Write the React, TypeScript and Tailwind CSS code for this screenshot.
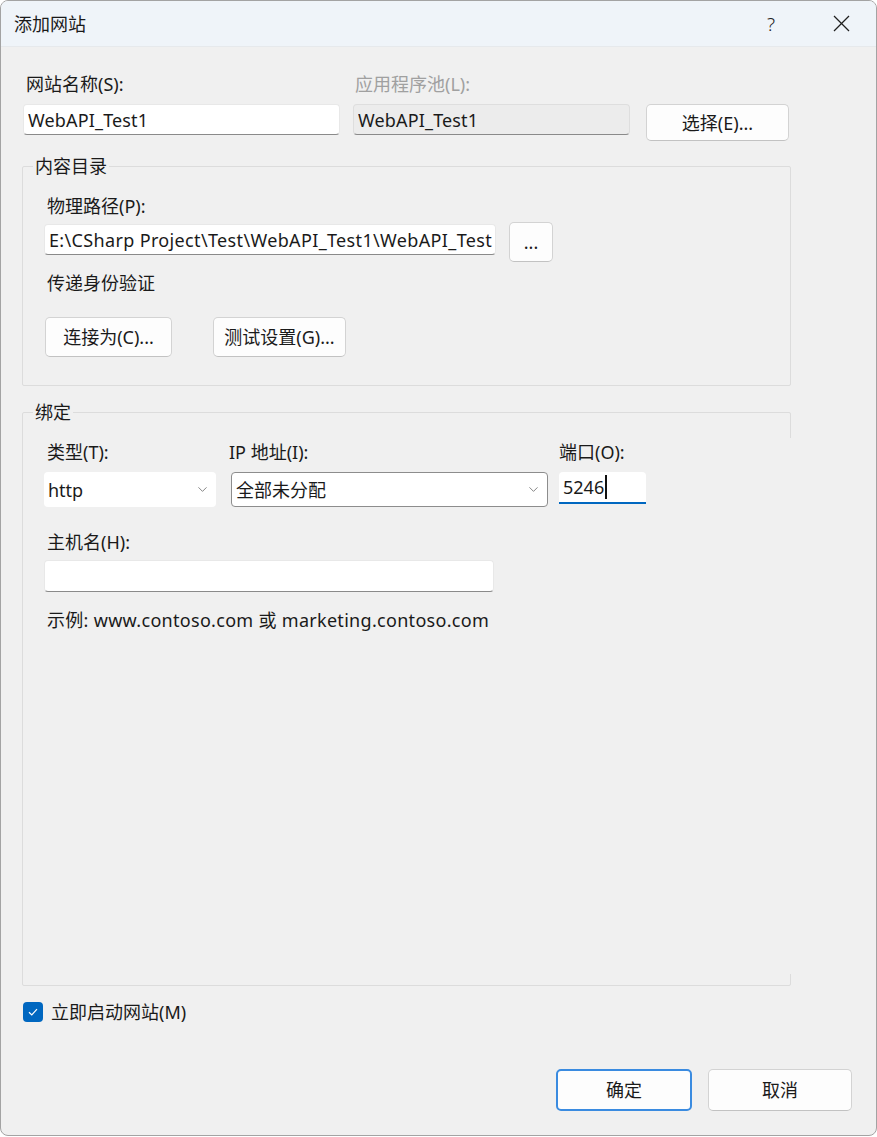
import { ChevronDown } from "lucide-react";

const font = { fontFamily: '"Noto Sans", "Noto Sans CJK SC", sans-serif' };

function TextBox({
  value,
  className,
  disabled,
}: {
  value?: string;
  className: string;
  disabled?: boolean;
}) {
  return (
    <div
      className={`flex items-center rounded-[4px] border border-b-[#8a8a8a] pl-[4px] ${
        disabled ? "border-[#dedede] bg-[#ececec]" : "border-[#e8e8e8] bg-white"
      } ${className}`}
    >
      <span className="whitespace-nowrap overflow-hidden">{value}</span>
    </div>
  );
}

function Button({ label, className }: { label: string; className: string }) {
  return (
    <div
      className={`flex items-center justify-center rounded-[5px] border border-[#d3d3d3] border-b-[#c2c2c2] bg-[#fdfdfd] ${className}`}
    >
      {label}
    </div>
  );
}

function Select({ value, className }: { value: string; className: string }) {
  return (
    <div className={`flex items-center justify-between rounded-[4px] bg-white pl-[4px] pr-[6px] ${className}`}>
      <span>{value}</span>
      <ChevronDown size={15} strokeWidth={1.3} className="text-[#6a6a6a]" />
    </div>
  );
}

export default function App() {
  return (
    <div className="h-[1137px] w-[877px] bg-white" style={font}>
      <div className="flex h-[1136px] w-[877px] flex-col overflow-hidden rounded-[8px] border border-[#a3a3a3] bg-[#f0f0f0] text-[18px] leading-[24px] text-[#1a1a1a]">
        {/* Title bar */}
        <div className="flex h-[46px] shrink-0 items-center border-b border-[#e6e9ec] bg-[#eff4f9]">
          <span className="ml-[13px] flex-1">添加网站</span>
          <div className="flex h-full w-[70px] items-center justify-center text-[19px] font-light text-[#222]">?</div>
          <div className="flex h-full w-[70px] items-center justify-center">
            <svg width="17" height="17" viewBox="0 0 17 17" stroke="#1f1f1f" strokeWidth="1.2">
              <line x1="1" y1="1" x2="16" y2="16" />
              <line x1="16" y1="1" x2="1" y2="16" />
            </svg>
          </div>
        </div>

        {/* Body */}
        <div className="flex flex-col pl-[21px] pt-[25px]">
          {/* Name / pool row */}
          <div className="flex">
            <span className="ml-[4px] w-[329px]">网站名称(S):</span>
            <span className="text-[#a0a0a0]">应用程序池(L):</span>
          </div>
          <div className="mt-[8px] flex items-start">
            <TextBox value="WebAPI_Test1" className="ml-[1px] h-[31px] w-[317px] tracking-[0.15px]" />
            <TextBox value="WebAPI_Test1" disabled className="ml-[13px] h-[31px] w-[277px] tracking-[0.15px]" />
            <Button label="选择(E)..." className="ml-[16px] h-[37px] w-[143px]" />
          </div>

          {/* Content directory */}
          <fieldset className="mt-[13px] w-[769px] rounded-[2px] border border-[#dcdcdc] pb-[28px] pl-[21px] pt-[16px]">
            <legend className="-ml-[11px] px-[2px]">内容目录</legend>
            <div className="pl-[3px]">物理路径(P):</div>
            <div className="mt-[4px] flex items-start">
              <TextBox
                value="E:\CSharp Project\Test\WebAPI_Test1\WebAPI_Test"
                className="mt-[2px] h-[31px] w-[452px] tracking-[0.35px]"
              />
              <Button label="..." className="ml-[13px] h-[40px] w-[44px]" />
            </div>
            <div className="mt-[9px] pl-[3px]">传递身份验证</div>
            <div className="mt-[22px] flex">
              <Button label="连接为(C)..." className="ml-[1px] h-[40px] w-[127px]" />
              <Button label="测试设置(G)..." className="ml-[41px] h-[40px] w-[133px]" />
            </div>
          </fieldset>

          {/* Binding */}
          <fieldset className="relative mt-[14px] h-[586px] w-[769px] rounded-[2px] border border-[#dcdcdc] pl-[21px] pt-[16px]">
            <legend className="-ml-[11px] px-[2px]">绑定</legend>
            <div className="absolute -right-[1px] top-[14px] h-[536px] w-[2px] bg-[#f0f0f0]" />
            <div className="flex">
              <span className="ml-[3px] w-[182px]">类型(T):</span>
              <span className="w-[330px]">IP 地址(I):</span>
              <span>端口(O):</span>
            </div>
            <div className="mt-[8px] flex items-start">
              <Select value="http" className="h-[35px] w-[172px]" />
              <Select
                value="全部未分配"
                className="ml-[15px] h-[35px] w-[317px] border border-[#8d8d8d]"
              />
              <div className="ml-[11px] flex h-[32px] w-[87px] items-center rounded-t-[4px] border-b-2 border-[#0067c0] bg-white pl-[4px]">
                <span>5246</span>
                <span className="ml-[1px] h-[24px] w-[1.5px] bg-[#111]" />
              </div>
            </div>
            <div className="mt-[23px] pl-[3px]">主机名(H):</div>
            <TextBox className="mt-[6px] h-[32px] w-[450px]" />
            <div className="mt-[16px] pl-[3px] tracking-[0.3px]">示例: www.contoso.com 或 marketing.contoso.com</div>
          </fieldset>

          {/* Start immediately */}
          <div className="mt-[14px] flex items-center">
            <div className="ml-[1px] flex h-[20px] w-[20px] items-center justify-center rounded-[4px] bg-[#0067c0]">
              <svg width="12" height="12" viewBox="0 0 12 12" fill="none" stroke="white" strokeWidth="1.2">
                <path d="M2 6.3 L4.8 9 L10 3.2" />
              </svg>
            </div>
            <span className="ml-[8px]">立即启动网站(M)</span>
          </div>

          {/* Dialog buttons */}
          <div className="mt-[45px] flex justify-end pr-[24px]">
            <div className="flex h-[42px] w-[136px] items-center justify-center rounded-[5px] border-2 border-[#3a8be0] bg-[#fdfdfd]">
              确定
            </div>
            <Button label="取消" className="ml-[16px] h-[42px] w-[144px]" />
          </div>
        </div>
      </div>
    </div>
  );
}
